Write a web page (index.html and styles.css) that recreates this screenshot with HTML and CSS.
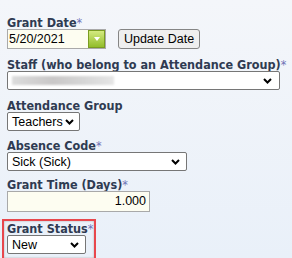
FILE: index.html
```html
<!DOCTYPE html>
<html lang="en">

<head>
  <meta charset="UTF-8">
  <title>Grant Absence</title>
  <link rel="stylesheet" href="styles.css">
</head>

<body>
  <div class="form">
    <div class="field wide">
      <label class="lbl">Grant Date<span class="req">*</span></label>
      <div class="row">
        <div class="datebox">
          <span class="dateval">5/20/2021</span>
          <span class="picker">
            <svg width="6" height="4" viewBox="0 0 6 4"><path d="M0 0h6L3 4z" fill="#fff" /></svg>
          </span>
        </div>
        <button class="btn">Update Date</button>
      </div>
    </div>

    <div class="field wide">
      <label class="lbl">Staff (who belong to an Attendance Group)<span class="req">*</span></label>
      <div class="sel sel-staff">
        <span class="blur"></span>
        <svg class="chev" width="9" height="6" viewBox="0 0 9 6"><path d="M1 1l3.5 3.5L8 1" fill="none" stroke="#000" stroke-width="2" /></svg>
      </div>
    </div>

    <div class="field">
      <label class="lbl">Attendance Group</label>
      <div class="sel sel-group">
        <span class="selval">Teachers</span>
        <svg class="chev" width="9" height="6" viewBox="0 0 9 6"><path d="M1 1l3.5 3.5L8 1" fill="none" stroke="#000" stroke-width="2" /></svg>
      </div>
    </div>

    <div class="field tight">
      <label class="lbl">Absence Code<span class="req">*</span></label>
      <div class="sel sel-code">
        <span class="selval">Sick (Sick)</span>
        <svg class="chev" width="9" height="6" viewBox="0 0 9 6"><path d="M1 1l3.5 3.5L8 1" fill="none" stroke="#000" stroke-width="2" /></svg>
      </div>
    </div>

    <div class="field tight">
      <label class="lbl">Grant Time (Days)<span class="req">*</span></label>
      <div class="numbox">1.000</div>
    </div>

    <div class="field highlight">
      <label class="lbl">Grant Status<span class="req">*</span></label>
      <div class="sel sel-status">
        <span class="selval">New</span>
        <svg class="chev" width="9" height="6" viewBox="0 0 9 6"><path d="M1 1l3.5 3.5L8 1" fill="none" stroke="#000" stroke-width="2" /></svg>
      </div>
    </div>
  </div>
</body>

</html>
```

FILE: styles.css
```css
* {
  margin: 0;
  padding: 0;
  box-sizing: border-box;
}

html,
body {
  width: 100%;
  height: 100%;
  overflow: hidden;
}

body {
  background: linear-gradient(#f4f6fa, #e9f0f9);
  font-family: "Liberation Sans", Arial, sans-serif;
  font-size: 12px;
  color: #000;
}

.form {
  display: flex;
  flex-direction: column;
  padding: 16px 0 0 7px;
}

.field {
  display: flex;
  flex-direction: column;
  align-items: flex-start;
  margin-bottom: 8px;
}

.field.wide {
  margin-bottom: 9px;
}

.field.tight {
  margin-bottom: 7px;
}

.lbl {
  font-family: "DejaVu Sans", Verdana, sans-serif;
  font-stretch: condensed;
  font-weight: bold;
  font-size: 12.5px;
  line-height: 13px;
  white-space: nowrap;
  color: #2f3b52;
}

.req {
  color: #6e72b6;
  font-weight: normal;
}

.row {
  display: flex;
  align-items: center;
  gap: 12px;
}

.datebox {
  display: flex;
  align-items: center;
  width: 99px;
  height: 20px;
  border: 1px solid #a9a9a9;
  background: #fdfdf1;
}

.dateval {
  flex: 1;
  padding-left: 1px;
  font-size: 12.5px;
}

.picker {
  width: 17px;
  height: 18px;
  border: 1px solid #7a9c22;
  background: linear-gradient(#d4ea80, #92bd2a);
  display: flex;
  justify-content: center;
  align-items: center;
}

.btn {
  width: 82px;
  height: 20px;
  font-family: "Liberation Sans", Arial, sans-serif;
  font-size: 12.5px;
  background: #efefef;
  border: 1px solid #858585;
  border-radius: 3px;
  color: #000;
}

.sel {
  display: flex;
  align-items: center;
  justify-content: space-between;
  height: 19px;
  border: 1px solid #767676;
  border-radius: 2px;
  background: #fff;
  padding: 0 6px 0 4px;
}

.selval {
  line-height: 16px;
  font-size: 12.5px;
}

.sel-staff {
  width: 273px;
  padding-right: 7px;
}

.sel-group {
  width: 73px;
  padding-right: 5px;
}

.sel-code {
  width: 180px;
}

.sel-status {
  width: 79px;
}

.blur {
  width: 102px;
  height: 9px;
  background: linear-gradient(90deg, #dcdcdc, #c9c7c7 40%, #d6d6d6 70%, #e6e6e6);
  filter: blur(0.8px);
}

.numbox {
  width: 143px;
  height: 21px;
  border: 1px solid #a9a9a9;
  background: #fdfdf1;
  text-align: right;
  line-height: 19px;
  padding-right: 3px;
  font-size: 12.5px;
}

.highlight {
  width: 94px;
  margin: 0 0 0 -5px;
  padding: 1px 0 4px 3px;
  border: 2px solid #e8474d;
  box-shadow: inset 0 0 2px #a8a8a8;
}
```
